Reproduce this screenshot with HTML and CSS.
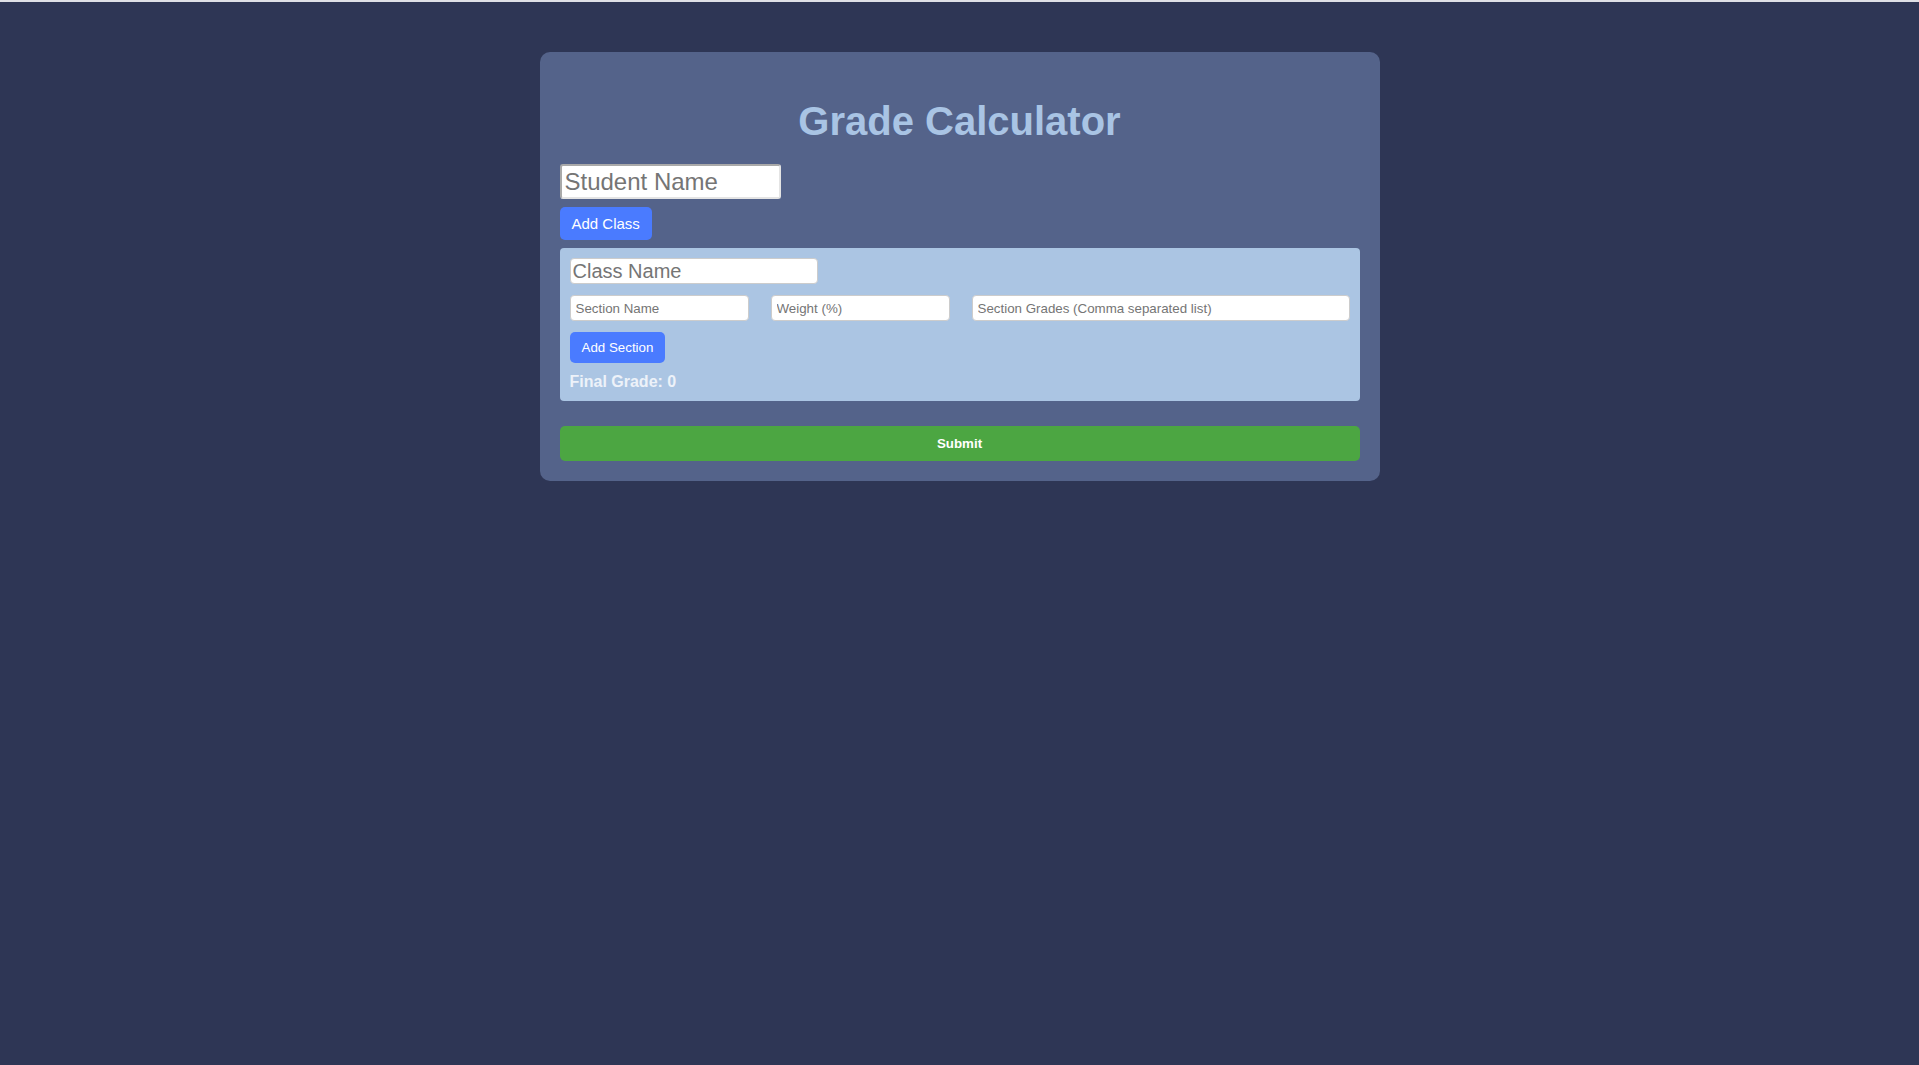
FILE: index.html
```html
<!DOCTYPE html>
<html lang="en">
<head>
<meta charset="utf-8">
<title>Grade Calculator</title>
<link rel="stylesheet" href="styles.css">
</head>
<body>
<div class="topline"></div>
<main class="card">
  <h1 class="title">Grade Calculator</h1>
  <input class="student-input" type="text" placeholder="Student Name">
  <button class="btn btn-class">Add Class</button>
  <section class="class-box">
    <input class="class-input" type="text" placeholder="Class Name">
    <div class="section-row">
      <input class="small-input" type="text" placeholder="Section Name">
      <input class="small-input" type="text" placeholder="Weight (%)">
      <input class="small-input" type="text" placeholder="Section Grades (Comma separated list)">
    </div>
    <button class="btn btn-section">Add Section</button>
    <p class="final-grade">Final Grade: 0</p>
  </section>
  <button class="submit">Submit</button>
</main>
</body>
</html>
```

FILE: styles.css
```css
html, body {
  margin: 0;
  padding: 0;
}
body {
  background: #2e3655;
  font-family: "Liberation Sans", Arial, sans-serif;
  min-height: 1065px;
}
.topline {
  height: 2px;
  background: #dfe0e6;
}
.card {
  width: 840px;
  box-sizing: border-box;
  margin: 50px auto 0;
  padding: 20px;
  background: #54638a;
  border-radius: 10px;
  display: flex;
  flex-direction: column;
  align-items: flex-start;
}
.title {
  align-self: stretch;
  text-align: center;
  font-size: 40px;
  font-weight: bold;
  color: #a9c4e4;
  margin: 26px 0 20px;
  line-height: 46px;
}
.student-input {
  width: 221px;
  height: 35px;
  box-sizing: border-box;
  font-family: "Liberation Sans", Arial, sans-serif;
  font-size: 24px;
  padding: 1px 3px;
  margin: 0;
  border-style: solid;
  border-width: 2px;
  border-color: #a9a9a9 #e4e4e4 #e4e4e4 #a9a9a9;
  border-radius: 3px;
  background: #ffffff;
}
.btn {
  background: #4a7bff;
  color: #ffffff;
  border: none;
  border-radius: 5px;
  font-family: "Liberation Sans", Arial, sans-serif;
  padding: 8px 12px;
  margin: 0;
  cursor: pointer;
}
.btn-class {
  margin-top: 8px;
  font-size: 15px;
  line-height: 17px;
}
.class-box {
  margin-top: 8px;
  align-self: stretch;
  background: #abc5e3;
  border-radius: 4px;
  padding: 10px;
  display: flex;
  flex-direction: column;
  align-items: flex-start;
}
.class-input {
  width: 248px;
  height: 26px;
  box-sizing: border-box;
  border: 1px solid #cccccc;
  border-radius: 4px;
  padding: 0 2px;
  margin: 0;
  font-family: "Liberation Sans", Arial, sans-serif;
  font-size: 20px;
  background: #ffffff;
}
.section-row {
  margin-top: 11px;
  align-self: stretch;
  display: grid;
  grid-template-columns: 179px 179px 1fr;
  column-gap: 22px;
}
.small-input {
  height: 26px;
  box-sizing: border-box;
  border: 1px solid #cccccc;
  border-radius: 4px;
  padding: 0 5px;
  margin: 0;
  font-family: "Liberation Sans", Arial, sans-serif;
  font-size: 13.333px;
  background: #ffffff;
  min-width: 0;
}
.btn-section {
  margin-top: 11px;
  font-size: 13.333px;
  line-height: 15px;
}
.final-grade {
  margin: 10px 0 0;
  font-size: 16px;
  font-weight: bold;
  color: #edf2f9;
  line-height: 18px;
}
.submit {
  margin-top: 25px;
  align-self: stretch;
  height: 35px;
  background: #4ca642;
  color: #ffffff;
  border: none;
  border-radius: 5px;
  font-family: "Liberation Sans", Arial, sans-serif;
  font-size: 13.333px;
  font-weight: bold;
  cursor: pointer;
}
```
